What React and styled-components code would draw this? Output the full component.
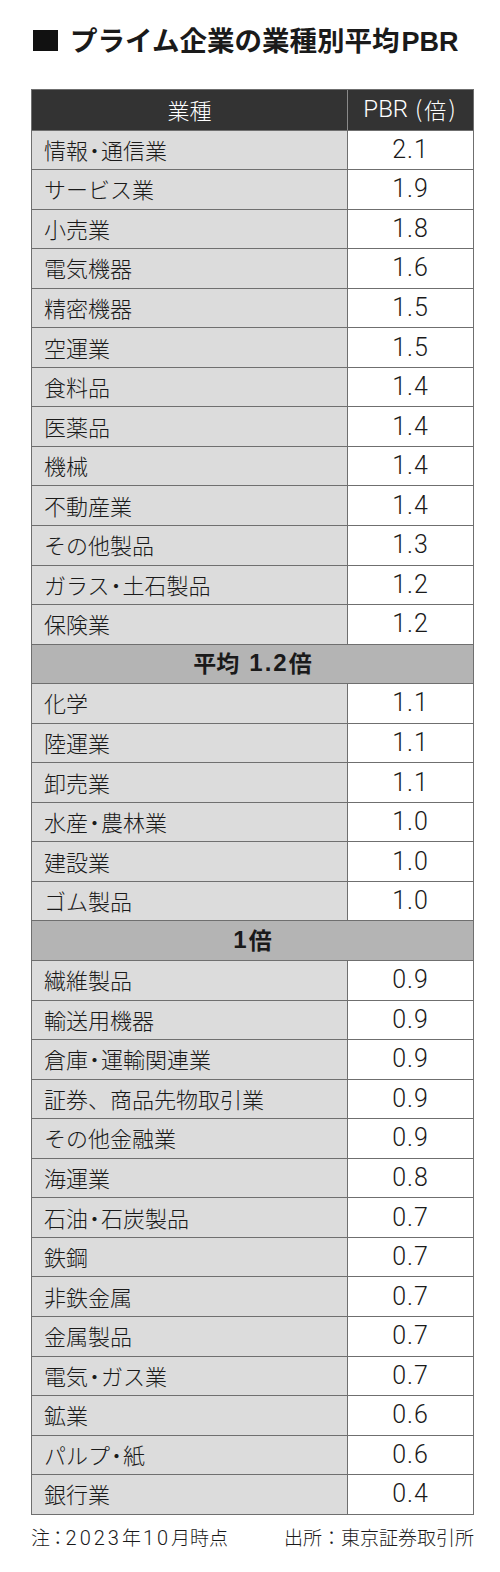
import React from "react";
import styled, { createGlobalStyle } from "styled-components";

const Global = createGlobalStyle`
  html, body { margin: 0; padding: 0; background: #fff; }
  body { font-family: "Noto Sans CJK JP", "Noto Sans", sans-serif; color: #1a1a1a; }
`;

const Page = styled.div`
  width: 500px;
  height: 1572px;
  box-sizing: border-box;
  padding: 27px 26px 0 31px;
  display: flex;
  flex-direction: column;
`;

const Title = styled.h1`
  margin: 0 0 0 2px;
  display: flex;
  align-items: center;
  gap: 12px;
  height: 28px;
  font-size: 27.5px;
  font-weight: 700;
  letter-spacing: 0;
  color: #1a1a1a;
  line-height: 1;
`;

const TitleLatin = styled.span`
  font-family: "Liberation Sans", "Noto Sans", sans-serif;
  font-weight: 700;
  font-size: 27px;
  margin-left: 2px;
`;

const Square = styled.span`
  width: 25px;
  height: 21px;
  background: #111;
  flex: none;
  margin-top: -1px;
`;

const Table = styled.div`
  margin-top: 34px;
  width: 443px;
  box-sizing: border-box;
  border: 1px solid #6f6f6f;
  display: grid;
  grid-template-columns: 315px 1fr;
  grid-auto-rows: 39.55px;
`;

const Cell = styled.div`
  box-sizing: border-box;
  display: flex;
  align-items: center;
  border-top: 1px solid #6f6f6f;
  border-left: ${(p) => (p.$right ? "1px solid #6f6f6f" : "none")};
  background: ${(p) => (p.$right ? "#fff" : "#dcdcdc")};
  padding: 0 0 2px 12px;
  font-size: 22px;
  font-weight: 300;
  color: #1a1a1a;
  line-height: 1;
  white-space: nowrap;
`;

const NumCell = styled(Cell)`
  justify-content: center;
  padding: 0 0 1px 0;
  font-family: "Roboto", "Noto Sans", sans-serif;
  font-size: 25px;
  font-weight: 300;
  letter-spacing: 1px;
`;

const Dot = styled.span`
  font-feature-settings: "palt";
  margin: 0 1px;
`;

const HeadCell = styled.div`
  box-sizing: border-box;
  display: flex;
  align-items: center;
  justify-content: center;
  background: #333;
  color: #fff;
  font-size: 22px;
  font-weight: 300;
  padding-bottom: 2px;
  border-left: ${(p) => (p.$right ? "1px solid #8a8a8a" : "none")};
  line-height: 1;
`;

const HeadLatin = styled.span`
  font-family: "Roboto", "Noto Sans", sans-serif;
  font-size: 24px;
  font-weight: 300;
  margin-right: 5px;
`;

const Paren = styled.span`
  font-weight: 300;
  font-size: 23px;
  margin: 0 2px;
`;

const Sep = styled.div`
  grid-column: 1 / -1;
  box-sizing: border-box;
  border-top: 1px solid #6f6f6f;
  background: #b4b4b4;
  display: flex;
  align-items: center;
  justify-content: center;
  padding-bottom: 2px;
  font-size: 23px;
  font-weight: 700;
  color: #1a1a1a;
  line-height: 1;
`;

const SepNum = styled.span`
  font-family: "Liberation Sans", "Noto Sans", sans-serif;
  font-weight: 700;
  font-size: 24px;
  letter-spacing: 2px;
  margin: 0 0 0 ${(p) => (p.$gap ? "10px" : "0")};
`;

const Footer = styled.div`
  margin-top: 11px;
  width: 443px;
  display: flex;
  justify-content: space-between;
  font-size: 19px;
  font-weight: 300;
  color: #1a1a1a;
  line-height: 1.2;
`;

const FootNum = styled.span`
  font-family: "Roboto", "Noto Sans", sans-serif;
  font-size: 20px;
  font-weight: 300;
  letter-spacing: 3px;
  margin-left: ${(p) => p.$ml || "0"};
`;

const Colon = styled.span`
  font-feature-settings: ${(p) => (p.$tight ? '"palt"' : "normal")};
  margin: 0 ${(p) => (p.$tight ? "3px" : "0")};
`;

const groups = [
  {
    rows: [
      ["情報・通信業", "2.1"],
      ["サービス業", "1.9"],
      ["小売業", "1.8"],
      ["電気機器", "1.6"],
      ["精密機器", "1.5"],
      ["空運業", "1.5"],
      ["食料品", "1.4"],
      ["医薬品", "1.4"],
      ["機械", "1.4"],
      ["不動産業", "1.4"],
      ["その他製品", "1.3"],
      ["ガラス・土石製品", "1.2"],
      ["保険業", "1.2"],
    ],
    sep: ["平均", "1.2", "倍"],
  },
  {
    rows: [
      ["化学", "1.1"],
      ["陸運業", "1.1"],
      ["卸売業", "1.1"],
      ["水産・農林業", "1.0"],
      ["建設業", "1.0"],
      ["ゴム製品", "1.0"],
    ],
    sep: ["", "1", "倍"],
  },
  {
    rows: [
      ["繊維製品", "0.9"],
      ["輸送用機器", "0.9"],
      ["倉庫・運輸関連業", "0.9"],
      ["証券、商品先物取引業", "0.9"],
      ["その他金融業", "0.9"],
      ["海運業", "0.8"],
      ["石油・石炭製品", "0.7"],
      ["鉄鋼", "0.7"],
      ["非鉄金属", "0.7"],
      ["金属製品", "0.7"],
      ["電気・ガス業", "0.7"],
      ["鉱業", "0.6"],
      ["パルプ・紙", "0.6"],
      ["銀行業", "0.4"],
    ],
  },
];

function Name({ text }) {
  const parts = text.split("・");
  return parts.map((p, i) => (
    <React.Fragment key={i}>
      {i > 0 && <Dot>・</Dot>}
      {p}
    </React.Fragment>
  ));
}

export default function App() {
  return (
    <>
      <Global />
      <Page>
        <Title>
          <Square />
          <span>
            プライム企業の業種別平均<TitleLatin>PBR</TitleLatin>
          </span>
        </Title>
        <Table>
          <HeadCell>業種</HeadCell>
          <HeadCell $right>
            <HeadLatin>PBR</HeadLatin>
            <Paren>(</Paren>倍<Paren>)</Paren>
          </HeadCell>
          {groups.map((g, gi) => (
            <React.Fragment key={gi}>
              {g.rows.map(([name, v]) => (
                <React.Fragment key={name}>
                  <Cell>
                    <Name text={name} />
                  </Cell>
                  <NumCell $right>{v}</NumCell>
                </React.Fragment>
              ))}
              {g.sep && (
                <Sep>
                  {g.sep[0]}
                  <SepNum $gap={!!g.sep[0]}>{g.sep[1]}</SepNum>
                  {g.sep[2]}
                </Sep>
              )}
            </React.Fragment>
          ))}
        </Table>
        <Footer>
          <span>
            注<Colon $tight>：</Colon>
            <FootNum>2023</FootNum>年<FootNum $ml="2px">10</FootNum>月時点
          </span>
          <span>
            出所<Colon>：</Colon>東京証券取引所
          </span>
        </Footer>
      </Page>
    </>
  );
}
